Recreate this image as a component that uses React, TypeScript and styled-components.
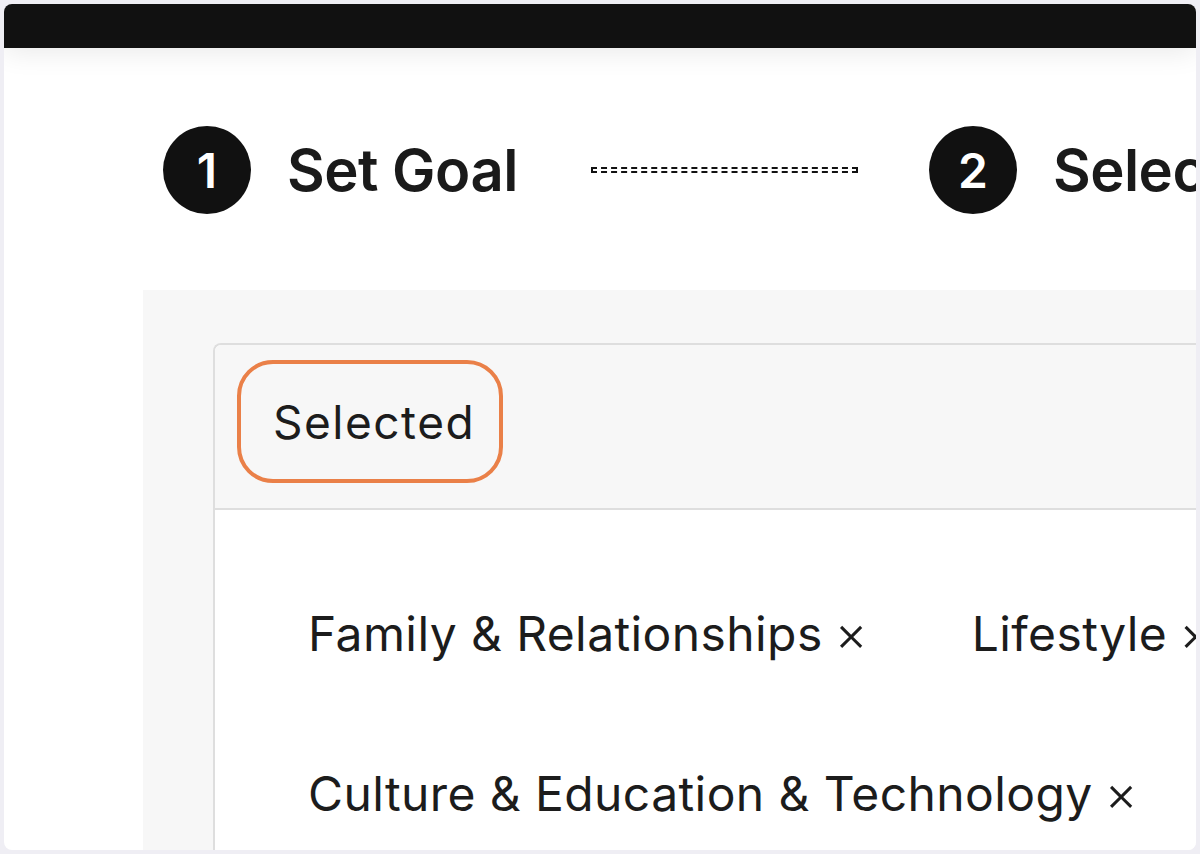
import styled, { createGlobalStyle } from 'styled-components';

const GlobalStyle = createGlobalStyle`
  html, body {
    margin: 0;
    padding: 0;
    background: #efeef4;
    font-family: 'Inter', 'Liberation Sans', sans-serif;
    color: #1c1c1c;
  }
`;

const steps = [
  { num: 1, label: 'Set Goal' },
  { num: 2, label: 'Select Topics' }
];

const selectedTopics = [['Family & Relationships', 'Lifestyle'], ['Culture & Education & Technology']];

export default function App() {
  return (
    <>
      <GlobalStyle />
      <Frame>
        <TopBar />
        <Stepper>
          {steps.map((step, index) => (
            <Step key={step.num}>
              {index > 0 && <Connector />}
              <StepCircle>{step.num}</StepCircle>
              <StepLabel>{step.label}</StepLabel>
            </Step>
          ))}
        </Stepper>
        <Panel>
          <SelectionCard>
            <CardHeader>
              <HighlightPill>Selected</HighlightPill>
            </CardHeader>
            <CardBody>
              {selectedTopics.map((row, i) => (
                <ChipRow key={i}>
                  {row.map((topic) => (
                    <Chip key={topic}>
                      {topic}
                      <Remove>×</Remove>
                    </Chip>
                  ))}
                </ChipRow>
              ))}
            </CardBody>
          </SelectionCard>
        </Panel>
      </Frame>
    </>
  );
}

const Frame = styled.div`
  margin: 4px;
  height: 846px;
  background: #fff;
  border-radius: 8px;
  overflow: hidden;
  display: flex;
  flex-direction: column;
`;

const TopBar = styled.div`
  height: 44px;
  flex-shrink: 0;
  background: #111;
  box-shadow: 0 4px 28px rgba(0, 0, 0, 0.09);
`;

const Stepper = styled.div`
  display: flex;
  align-items: center;
  padding: 78px 0 0 159px;
  height: 88px;
  white-space: nowrap;
`;

const Step = styled.div`
  display: flex;
  align-items: center;
  flex-shrink: 0;
`;

const Connector = styled.div`
  width: 263px;
  height: 2px;
  border: 2px dashed #111;
  margin: 0 71px 0 73px;
`;

const StepCircle = styled.div`
  width: 88px;
  height: 88px;
  border-radius: 50%;
  background: #111;
  color: #fff;
  display: flex;
  align-items: center;
  justify-content: center;
  font-size: 48px;
  font-weight: 600;
  flex-shrink: 0;
`;

const StepLabel = styled.div`
  margin-left: 36px;
  font-size: 58px;
  font-weight: 600;
  letter-spacing: -0.5px;
  color: #1a1a1a;
`;

const Panel = styled.div`
  flex: 1;
  margin: 76px 0 0 139px;
  padding: 53px 0 0 70px;
  background: #f7f7f7;
`;

const SelectionCard = styled.div`
  margin-right: -40px;
  height: 100%;
  border: 2px solid #dedede;
  border-right: none;
  border-bottom: none;
  border-radius: 8px 0 0 0;
  background: #fff;
  overflow: hidden;
`;

const CardHeader = styled.div`
  height: 165px;
  box-sizing: border-box;
  padding: 15px 0 0 22px;
  background: #f7f7f7;
  border-bottom: 2px solid #dedede;
`;

const HighlightPill = styled.div`
  display: inline-flex;
  align-items: center;
  box-sizing: border-box;
  height: 123px;
  padding: 0 24px 0 32px;
  border: 4px solid #ea8048;
  border-radius: 36px;
  font-size: 46px;
  letter-spacing: 1.5px;
  color: #1c1c1c;
`;

const CardBody = styled.div`
  padding: 95px 0 0 93px;
  display: flex;
  flex-direction: column;
  gap: 103px;
`;

const ChipRow = styled.div`
  display: flex;
  gap: 104px;
  white-space: nowrap;
`;

const Chip = styled.div`
  font-size: 48px;
  line-height: 56px;
  letter-spacing: 0.4px;
  color: #1c1c1c;
  display: flex;
  align-items: baseline;
`;

const Remove = styled.span`
  margin-left: 12px;
  font-size: 50px;
  font-weight: 300;
`;
